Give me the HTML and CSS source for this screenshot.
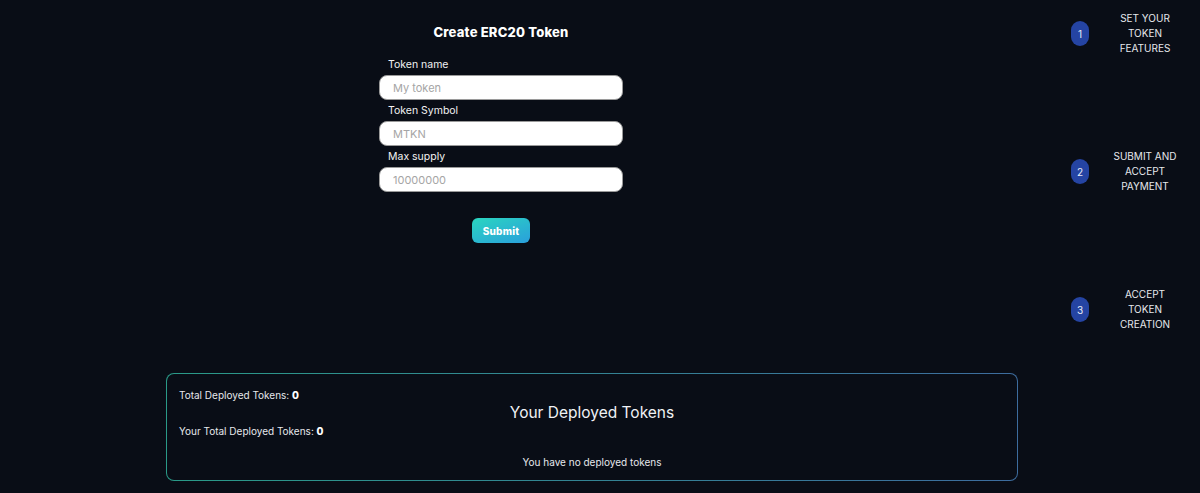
FILE: index.html
```html
<!DOCTYPE html>
<html>
<head>
    <meta charset="UTF-8">
    <title>Create ERC20 Token</title>
    <link rel="stylesheet" href="styles.css">
</head>
<body>
    <div class="top">
        <div class="main">
            <h1 class="title">Create ERC20 Token</h1>
            <form class="token-form">
                <label>Token name</label>
                <input type="text" placeholder="My token">
                <label>Token Symbol</label>
                <input type="text" placeholder="MTKN">
                <label>Max supply</label>
                <input type="text" placeholder="10000000">
                <button type="button" class="submit">Submit</button>
            </form>
        </div>
        <div class="steps">
            <div class="step">
                <span class="badge">1</span>
                <span class="step-text">SET YOUR<br>TOKEN<br>FEATURES</span>
            </div>
            <div class="step">
                <span class="badge">2</span>
                <span class="step-text">SUBMIT AND<br>ACCEPT<br>PAYMENT</span>
            </div>
            <div class="step">
                <span class="badge">3</span>
                <span class="step-text">ACCEPT<br>TOKEN<br>CREATION</span>
            </div>
        </div>
    </div>

    <div class="deployed">
        <div class="stat">Total Deployed Tokens: <b>0</b></div>
        <h2 class="deployed-title">Your Deployed Tokens</h2>
        <div class="stat">Your Total Deployed Tokens: <b>0</b></div>
        <p class="empty">You have no deployed tokens</p>
    </div>
</body>
</html>
```

FILE: styles.css
```css
body {
    margin: 0;
    background-color: #090d16;
    color: #eef0f3;
    font-family: Inter, "Noto Sans", sans-serif;
    }
.top {
    display: flex;
    height: 373px;
    }
.main {
    flex: 1;
    padding-right: 58px;
    display: flex;
    flex-direction: column;
    align-items: center;
    }
.title {
    margin: 22px 0 12px 0;
    font-size: 13px;
    line-height: 20px;
    font-weight: 800;
    letter-spacing: 0.2px;
    color: #ffffff;
    }
.token-form {
    display: flex;
    flex-direction: column;
    width: 244px;
    }
label {
    font-size: 10.5px;
    line-height: 21px;
    padding-left: 9px;
    color: #f2f2f2;
    }
input {
    box-sizing: border-box;
    height: 25px;
    border: 1px solid #9a9a9a;
    border-radius: 8px;
    background: #ffffff;
    padding: 0 13px;
    font-family: Inter, "Noto Sans", sans-serif;
    font-size: 11px;
    }
input::placeholder {
    color: #a5a5a5;
    }
.submit {
    align-self: center;
    margin-top: 26px;
    width: 58px;
    height: 25px;
    border: none;
    border-radius: 6px;
    background: linear-gradient(160deg, #2ad6c0, #2a9fdc);
    color: #ffffff;
    font-family: Inter, "Noto Sans", sans-serif;
    font-size: 10px;
    font-weight: 800;
    letter-spacing: 0.2px;
    }
.steps {
    width: 129px;
    padding-left: 11px;
    padding-top: 11px;
    }
.step {
    display: flex;
    height: 138px;
    align-items: flex-start;
    }
.badge {
    margin-top: 10px;
    width: 18px;
    height: 25px;
    border-radius: 9px;
    background: #2544a3;
    color: #e8ecf8;
    font-size: 10px;
    display: flex;
    align-items: center;
    justify-content: center;
    }
.step-text {
    width: 90px;
    margin-left: 11px;
    text-align: center;
    font-size: 10px;
    line-height: 15px;
    color: #e6e8ec;
    }
.deployed {
    box-sizing: border-box;
    margin-left: 166px;
    width: 852px;
    height: 108px;
    padding: 13px 12px 0 12px;
    border: 1px solid transparent;
    border-radius: 8px;
    background: linear-gradient(#090d16, #090d16) padding-box,
        linear-gradient(90deg, #2a9a88, #3d6c9e) border-box;
    }
.stat {
    font-size: 10px;
    line-height: 16px;
    color: #e6e8ec;
    }
.stat b {
    font-weight: 800;
    color: #ffffff;
    }
.deployed-title {
    margin: 0;
    text-align: center;
    font-size: 15.5px;
    line-height: 20px;
    font-weight: 400;
    color: #f0f2f5;
    }
.empty {
    margin: 15px 0 0 0;
    text-align: center;
    font-size: 10px;
    line-height: 16px;
    color: #e6e8ec;
    }
```
